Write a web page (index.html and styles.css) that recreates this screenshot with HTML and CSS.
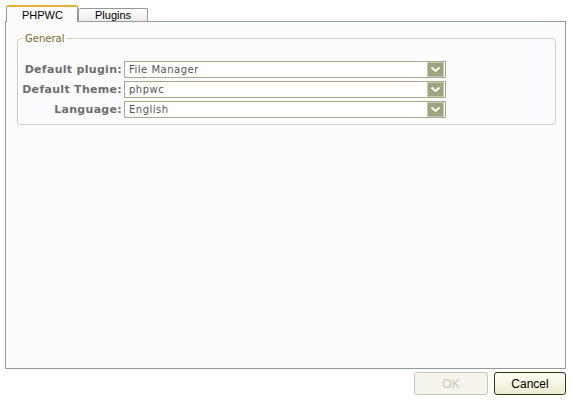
FILE: index.html
```html
<!DOCTYPE html>
<html>
<head>
<meta charset="utf-8">
<link rel="stylesheet" href="styles.css">
</head>
<body>
<div class="dialog">
  <div class="tabs">
    <div class="tab active">PHPWC</div>
    <div class="tab">Plugins</div>
  </div>
  <div class="panel">
    <fieldset class="group">
      <legend>General</legend>
      <div class="row">
        <label>Default plugin:</label>
        <div class="select"><span>File Manager</span><span class="arrow"><svg width="11" height="7" viewBox="0 0 11 7"><path d="M1.5 1.5 L5.5 5 L9.5 1.5" fill="none" stroke="#fff" stroke-width="2"/></svg></span></div>
      </div>
      <div class="row">
        <label>Default Theme:</label>
        <div class="select"><span>phpwc</span><span class="arrow"><svg width="11" height="7" viewBox="0 0 11 7"><path d="M1.5 1.5 L5.5 5 L9.5 1.5" fill="none" stroke="#fff" stroke-width="2"/></svg></span></div>
      </div>
      <div class="row">
        <label>Language:</label>
        <div class="select"><span>English</span><span class="arrow"><svg width="11" height="7" viewBox="0 0 11 7"><path d="M1.5 1.5 L5.5 5 L9.5 1.5" fill="none" stroke="#fff" stroke-width="2"/></svg></span></div>
      </div>
    </fieldset>
  </div>
  <div class="buttons">
    <button class="btn disabled">OK</button>
    <button class="btn">Cancel</button>
  </div>
</div>
</body>
</html>
```
FILE: styles.css
```css
html, body { margin: 0; padding: 0; background: #fff; }
.dialog { width: 572px; height: 403px; padding: 4px 6px 0 5px; box-sizing: border-box; font-family: "DejaVu Sans", Verdana, sans-serif; }
.tabs { display: flex; align-items: flex-end; height: 17px; padding-left: 1px; }
.tab { font-family: "Liberation Sans", Arial, sans-serif; font-size: 11px; color: #000; border: 1px solid #919b9c; border-bottom: none; background: linear-gradient(#fefefe, #ececec); height: 12px; line-height: 12px; width: 36px; padding: 0 16px; text-align: center; border-radius: 2px 2px 0 0; }
.tab.active { background: #fcfcfe; border-top: 2px solid #e8b033; height: 15px; line-height: 16px; width: 40px; padding: 0 15px; position: relative; top: 1px; z-index: 1; }
.panel { border: 1px solid #919b9c; background: #fcfcfe; height: 348px; box-sizing: border-box; padding: 11px 9px 0 11px; }
.group { border: 1px solid #d0d0bf; border-radius: 4px; margin: 0; padding: 15px 0 5px 0; }
.group legend { font-family: "DejaVu Sans", Verdana, sans-serif; font-size: 10px; color: #7a6a1c; padding: 0 2px; margin-left: 5px; }
.row { display: flex; align-items: center; height: 20px; }
.row label { width: 104px; text-align: right; font-weight: bold; font-size: 11px; color: #6e6e6e; padding-right: 1px; letter-spacing: 0.3px; }
.select { margin-left: 1px; width: 322px; height: 17px; box-sizing: border-box; border: 1px solid #a8a88f; background: #fff; display: flex; align-items: center; justify-content: space-between; font-size: 10px; color: #555; padding-left: 4px; letter-spacing: 0.5px; }
.arrow { width: 15px; height: 13px; background: #9ea47b; border: 1px solid #c6c9ad; margin-right: 1px; display: flex; align-items: center; justify-content: center; }
.buttons { display: flex; justify-content: flex-end; gap: 6px; margin-top: 3px; padding-right: 0; }
.btn { width: 72px; height: 23px; font-family: "Liberation Sans", Arial, sans-serif; font-size: 12px; border: 1px solid #2c3b12; border-radius: 3px; background: linear-gradient(#fdfdf3, #ecebd2); color: #000; padding: 0; }
.btn.disabled { width: 74px; border-color: #c9c7ba; background: #f5f4ea; color: #c9c7ba; }
```
